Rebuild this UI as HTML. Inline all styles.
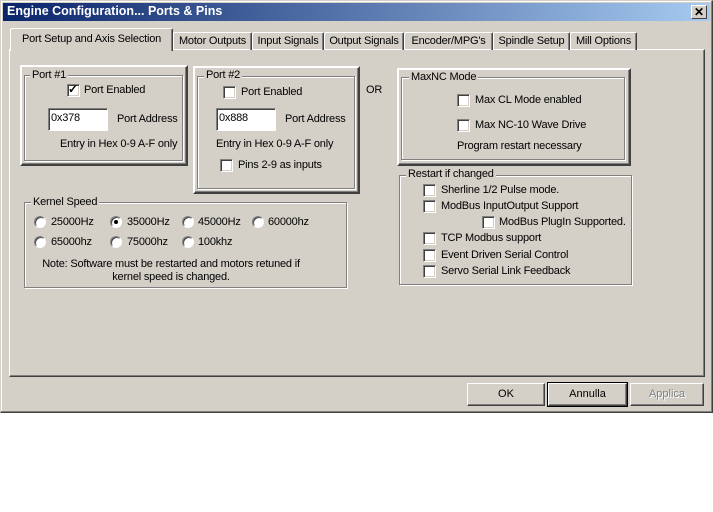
<!DOCTYPE html>
<html><head><meta charset="utf-8"><style>
*{margin:0;padding:0;box-sizing:border-box}
body{width:713px;height:512px;background:#fff;position:relative;overflow:hidden;font-family:"Liberation Sans",sans-serif;font-size:11px;color:#000}
.a{position:absolute}
.t{position:absolute;white-space:nowrap;line-height:13px;font-size:11px;letter-spacing:-0.2px}
#win{left:0;top:0;width:713px;height:413px;background:#d4d0c8;border:1px solid #d4d0c8;border-right-color:#404040;border-bottom-color:#404040;box-shadow:inset -1px -1px 0 #808080,inset 1px 1px 0 #fff}
#title{left:3px;top:3px;width:707px;height:18px;background:linear-gradient(90deg,#0a246a,#a6caf0)}
.cb{position:absolute;width:13px;height:13px;background:#fff;border:1px solid;border-color:#808080 #fff #fff #808080;box-shadow:inset 1px 1px 0 #404040,inset -1px -1px 0 #d4d0c8}
.rb{position:absolute;width:12px;height:12px;border-radius:50%;background:#fff;border:1px solid;border-color:#808080 #fff #fff #808080;box-shadow:inset 1px 1px 0 #404040}
.dot{position:absolute;left:3px;top:3px;width:4px;height:4px;border-radius:50%;background:#000}
.grv{position:absolute;border:1px solid #808080;box-shadow:1px 1px 0 #fff,inset 1px 1px 0 #fff}
.frm{position:absolute;border:2px solid;border-color:#fff #404040 #404040 #fff;box-shadow:inset -1px -1px 0 #808080,inset 1px 1px 0 #d4d0c8}
.tb{position:absolute;background:#fff;border:1px solid;border-color:#808080 #fff #fff #808080;box-shadow:inset 1px 1px 0 #404040}
.lg{position:absolute;background:#d4d0c8;padding:0 2px;line-height:13px;white-space:nowrap;letter-spacing:-0.2px}
.tab{position:absolute;top:32px;height:18px;border:1px solid;border-color:#fff #404040 transparent #fff;border-bottom:none;box-shadow:inset -1px 0 0 #808080;line-height:16px;text-align:center;border-radius:2px 2px 0 0;letter-spacing:-0.2px;white-space:nowrap}
.btn{position:absolute;top:383px;height:23px;border:1px solid;border-color:#fff #404040 #404040 #fff;box-shadow:inset -1px -1px 0 #808080;text-align:center;line-height:21px}
</style></head><body>
<div id="win" class="a"></div>
<div id="title" class="a"></div>
<div class="t" style="left:7px;top:5px;color:#fff;font-weight:bold;font-size:12.5px;letter-spacing:0">Engine Configuration... Ports &amp; Pins</div>
<div class="a" style="left:691px;top:5px;width:16px;height:14px;background:#d4d0c8;border:1px solid;border-color:#fff #404040 #404040 #fff;font-weight:bold;font-size:12px;line-height:12px;text-align:center">✕</div>

<div class="a" style="left:9px;top:49px;width:696px;height:328px;border:1px solid;border-color:#fff #404040 #404040 #fff;box-shadow:inset -1px -1px 0 #808080"></div>
<div class="tab" style="left:173px;width:79px">Motor Outputs</div>
<div class="tab" style="left:252px;width:72px">Input Signals</div>
<div class="tab" style="left:324px;width:80px">Output Signals</div>
<div class="tab" style="left:404px;width:89px">Encoder/MPG's</div>
<div class="tab" style="left:493px;width:77px">Spindle Setup</div>
<div class="tab" style="left:570px;width:67px">Mill Options</div>
<div class="tab" style="left:10px;top:28px;width:163px;height:23px;background:#d4d0c8;line-height:20px;z-index:2">Port Setup and Axis Selection</div>

<div class="frm" style="left:20px;top:65px;width:168px;height:101px"></div>
<div class="grv" style="left:24px;top:75px;width:159px;height:86px"></div>
<div class="lg" style="left:30px;top:69px">Port #1</div>
<div class="cb" style="left:67px;top:84px"></div>
<div class="t" style="left:68px;top:83px;font-size:12px;font-weight:bold">✓</div>
<div class="t" style="left:84px;top:84px">Port Enabled</div>
<div class="tb" style="left:48px;top:108px;width:60px;height:23px"></div>
<div class="t" style="left:51px;top:112px">0x378</div>
<div class="t" style="left:117px;top:113px">Port Address</div>
<div class="t" style="left:60px;top:138px">Entry in Hex 0-9 A-F only</div>

<div class="frm" style="left:193px;top:66px;width:167px;height:128px"></div>
<div class="grv" style="left:197px;top:76px;width:158px;height:113px"></div>
<div class="lg" style="left:204px;top:69px">Port #2</div>
<div class="cb" style="left:223px;top:86px"></div>
<div class="t" style="left:241px;top:86px">Port Enabled</div>
<div class="tb" style="left:216px;top:108px;width:60px;height:23px"></div>
<div class="t" style="left:219px;top:112px">0x888</div>
<div class="t" style="left:285px;top:113px">Port Address</div>
<div class="t" style="left:216px;top:138px">Entry in Hex 0-9 A-F only</div>
<div class="cb" style="left:220px;top:159px"></div>
<div class="t" style="left:238px;top:159px">Pins 2-9 as inputs</div>

<div class="t" style="left:366px;top:84px">OR</div>

<div class="frm" style="left:397px;top:68px;width:234px;height:98px"></div>
<div class="grv" style="left:401px;top:77px;width:224px;height:83px"></div>
<div class="lg" style="left:409px;top:71px">MaxNC Mode</div>
<div class="cb" style="left:457px;top:94px"></div>
<div class="t" style="left:475px;top:94px">Max CL Mode enabled</div>
<div class="cb" style="left:457px;top:119px"></div>
<div class="t" style="left:475px;top:119px">Max NC-10 Wave Drive</div>
<div class="t" style="left:457px;top:140px">Program restart necessary</div>

<div class="grv" style="left:399px;top:175px;width:233px;height:110px"></div>
<div class="lg" style="left:406px;top:168px">Restart if changed</div>
<div class="cb" style="left:423px;top:184px"></div><div class="t" style="left:441px;top:184px">Sherline 1/2 Pulse mode.</div>
<div class="cb" style="left:423px;top:200px"></div><div class="t" style="left:441px;top:200px">ModBus InputOutput Support</div>
<div class="cb" style="left:482px;top:216px"></div><div class="t" style="left:499px;top:216px">ModBus PlugIn Supported.</div>
<div class="cb" style="left:423px;top:232px"></div><div class="t" style="left:441px;top:232px">TCP Modbus support</div>
<div class="cb" style="left:423px;top:249px"></div><div class="t" style="left:441px;top:249px">Event Driven Serial Control</div>
<div class="cb" style="left:423px;top:265px"></div><div class="t" style="left:441px;top:265px">Servo Serial Link Feedback</div>

<div class="grv" style="left:24px;top:202px;width:323px;height:86px"></div>
<div class="lg" style="left:31px;top:196px">Kernel Speed</div>
<div class="rb" style="left:34px;top:216px"></div><div class="t" style="left:51px;top:216px">25000Hz</div>
<div class="rb" style="left:110px;top:216px"><div class="dot"></div></div><div class="t" style="left:127px;top:216px">35000Hz</div>
<div class="rb" style="left:182px;top:216px"></div><div class="t" style="left:198px;top:216px">45000Hz</div>
<div class="rb" style="left:252px;top:216px"></div><div class="t" style="left:268px;top:216px">60000hz</div>
<div class="rb" style="left:34px;top:236px"></div><div class="t" style="left:51px;top:236px">65000hz</div>
<div class="rb" style="left:110px;top:236px"></div><div class="t" style="left:127px;top:236px">75000hz</div>
<div class="rb" style="left:182px;top:236px"></div><div class="t" style="left:198px;top:236px">100khz</div>
<div class="t" style="left:26px;top:258px;width:290px;text-align:center;font-size:11px">Note: Software must be restarted and motors retuned if<br>kernel speed is changed.</div>

<div class="btn" style="left:467px;width:78px">OK</div>
<div class="btn" style="left:548px;width:79px;outline:1px solid #000">Annulla</div>
<div class="btn" style="left:630px;width:74px;color:#808080;text-shadow:1px 1px 0 #fff">Applica</div>
</body></html>
